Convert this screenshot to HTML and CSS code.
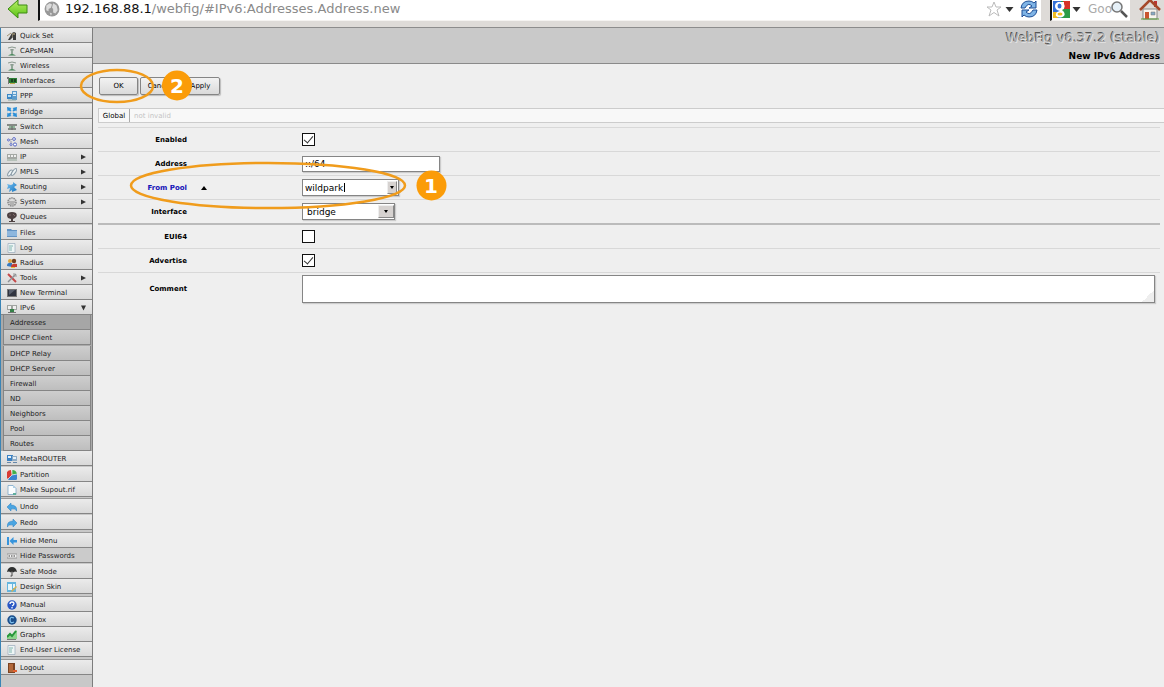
FILE: index.html
```
<!DOCTYPE html>
<html lang="en">
<head>
<meta charset="utf-8">
<title>New IPv6 Address - WebFig</title>
<link rel="stylesheet" href="styles.css">
</head>
<body>
<svg class="sprite" aria-hidden="true">
  <linearGradient id="gg" x1="0" y1="0" x2="0" y2="1"><stop offset="0" stop-color="#b9ee68"/><stop offset="1" stop-color="#58c312"/></linearGradient>
  <linearGradient id="bl" x1="0" y1="0" x2="1" y2="1"><stop offset="0" stop-color="#7cc4f2"/><stop offset="1" stop-color="#1674c0"/></linearGradient>
  <symbol id="i-quick" viewBox="0 0 10 10"><path d="M1 9L5 2l2-1 2 1v7H6V6L3 9z" fill="#3b3b3b"/><path d="M0 5l4-3" stroke="#a09070"/><path d="M5 3h3M5 5h1" stroke="#c9b98d"/></symbol>
  <symbol id="i-ant" viewBox="0 0 10 10"><path d="M5 3v5" stroke="#5c7f66" stroke-width="1.200"/><path d="M1 2q4-2 8 0M3 4q2-1 4 0" stroke="#8c9a90" fill="none"/><path d="M1 9.500q4-3 8 0z" fill="#3c8050"/></symbol>
  <symbol id="i-if" viewBox="0 0 10 10"><path d="M0 1h2v7H1V3H0z" fill="#777"/><path d="M2 2h8v5H2z" fill="#2c7d35"/><path d="M4 3h2v3H4zM7 3h2v3H7z" fill="#1d4021"/><path d="M3 7h5v1H3z" fill="#bba74a"/></symbol>
  <symbol id="i-ppp" viewBox="0 0 10 10"><path d="M0 3h5v5H0z" fill="#3c86c4"/><path d="M1 4h3v2H1z" fill="#b4dcf5"/><path d="M5 0h5v9H5z" fill="#5b9acb"/><path d="M6 1h3v2H6zM6 4h3v1H6z" fill="#d4e8f6"/><path d="M1 9h8" stroke="#8aa"/></symbol>
  <symbol id="i-bridge" viewBox="0 0 10 10"><path d="M0 0l4.500 1-1 1 1 2-1 .5-2-1-1 1zM10 0L5.500 1l1 1-1 2 1 .5 2-1 1 1zM0 10l4.500-1-1-1 1-2-1-.5-2 1-1-1zM10 10L5.500 9l1-1-1-2 1-.5 2 1 1-1z" fill="#2b8fd8"/></symbol>
  <symbol id="i-switch" viewBox="0 0 10 10"><path d="M0 2h10v2H0zM1 6h8v2H1z" fill="#858a85"/><path d="M2 5h6" stroke="#3c8a50"/><path d="M5 4v4" stroke="#666"/></symbol>
  <symbol id="i-mesh" viewBox="0 0 10 10"><g fill="#fff" stroke="#5666c4"><circle cx="1.500" cy="3" r="1"/><circle cx="7" cy="2" r="1.400"/><circle cx="8" cy="7.500" r="1.600"/><circle cx="4" cy="7.500" r="1"/></g><path d="M3 3l3-1M4 6V4" stroke="#99a"/></symbol>
  <symbol id="i-ip" viewBox="0 0 10 10"><path d="M0 2h10v5H0z" fill="#a4a8a4"/><path d="M1 3h2v2H1zM4 3h2v2H4zM7 3h2v2H7z" fill="#eee"/><path d="M1 7v2M3 7v2M5 7v2M7 7v2M9 7v2" stroke="#5c8065" stroke-width=".6"/></symbol>
  <symbol id="i-mpls" viewBox="0 0 10 10"><g fill="#edf3f5" stroke="#8c9ca8"><ellipse cx="3" cy="6" rx="1.500" ry="3.500" transform="rotate(35 3 6)"/><ellipse cx="7" cy="5" rx="1.500" ry="4" transform="rotate(35 7 5)"/></g></symbol>
  <symbol id="i-route" viewBox="0 0 10 10"><path d="M0 2l4 1 2-1V0l4 3-3 2 3 3-5 2V8L2 10l1-4-3 1 1-3z" fill="url(#bl)"/></symbol>
  <symbol id="i-sys" viewBox="0 0 10 10"><circle cx="5" cy="5" r="4" fill="#ddd" stroke="#888" stroke-dasharray="1.500 .7" stroke-width="1.600"/><path d="M2 5h6M3 7h4" stroke="#888"/></symbol>
  <symbol id="i-queue" viewBox="0 0 10 10"><path d="M1 1q4-2 8 0 2 3-1 5l-2 1v2h2v1H2V9h2V7L1 6Q-1 3 1 1" fill="#4d4142"/><path d="M2 3h2M6 2l2 2" stroke="#806c6c"/></symbol>
  <symbol id="i-files" viewBox="0 0 10 10"><path d="M0 1h4l1 1h5v7H0z" fill="#6393c3"/><path d="M0 3h10v5H0z" fill="#8db6dd"/></symbol>
  <symbol id="i-log" viewBox="0 0 10 10"><path d="M1 .5h7v9H1z" fill="#eef5f5" stroke="#9ab" stroke-width=".7"/><path d="M2 3h4M2 5h3M2 7h3" stroke="#64a5a0" stroke-width=".8"/></symbol>
  <symbol id="i-radius" viewBox="0 0 10 10"><circle cx="3" cy="3" r="2" fill="#e0a63d"/><path d="M0 8q0-4 5-3v4z" fill="#367ac1"/><circle cx="7" cy="3" r="2.200" fill="#704020"/><path d="M4 9q0-4 6-3v3z" fill="#c73c31"/><path d="M4 9h4v1H4z" fill="#e8bf3c"/></symbol>
  <symbol id="i-tools" viewBox="0 0 10 10"><path d="M1 1l8 8" stroke="#c44848" stroke-width="2"/><path d="M9 1L1 9" stroke="#8c9095" stroke-width="1.500"/><path d="M7 0v3h3" stroke="#999" fill="none"/></symbol>
  <symbol id="i-term" viewBox="0 0 10 10"><path d="M0 1h10v8H0z" fill="#777"/><path d="M1 2h8v6H1z" fill="#303440"/><path d="M2 2h6L2 7z" fill="#59606e"/></symbol>
  <symbol id="i-ipv6" viewBox="0 0 10 10"><path d="M0 2h10v5H0z" fill="#a0a4a0"/><path d="M1 3h3v3H1zM6 3h3v3H6z" fill="#f0f0f0"/><path d="M3 6h4v3H3z" fill="#368148"/><path d="M1 9.500h8" stroke="#777"/></symbol>
  <symbol id="i-meta" viewBox="0 0 10 10"><path d="M0 1h6v6H0z" fill="#3c82c4"/><path d="M5 2h5v5H5z" fill="#8fabc4"/><path d="M1 2h3v2H1zM6 3h3v2H6z" fill="#e4f0fa"/><path d="M0 8.500h4M6 8.500h4" stroke="#68a"/></symbol>
  <symbol id="i-part" viewBox="0 0 10 10"><path d="M5 5L1 9A5 5 0 0 1 4 0z" fill="#d93c35"/><path d="M5 5V0a5 5 0 0 1 5 4z" fill="#3fae49"/><path d="M5 5l5-1a5 5 0 0 1-9 5z" fill="#3a83cf"/><path d="M5 5V0M5 5l5-1M5 5L1 9" stroke="#fff" stroke-width=".6"/></symbol>
  <symbol id="i-file" viewBox="0 0 10 10"><path d="M1 .5h5l3 3v6H1z" fill="#fafdff" stroke="#7ba6c6" stroke-width=".8"/><path d="M6 0v3h3z" fill="#afd0e6"/><path d="M6 8h3v2H6z" fill="#5eae9c"/></symbol>
  <symbol id="i-undo" viewBox="0 0 10 10"><path d="M0 5l4-4v2q6 0 6 6Q8 6 4 7v2z" fill="#4aa5e2" stroke="#2b7fc0" stroke-width=".5"/></symbol>
  <symbol id="i-redo" viewBox="0 0 10 10"><path d="M10 5L6 1v2Q0 3 0 9q2-3 6-2v2z" fill="#4aa5e2" stroke="#2b7fc0" stroke-width=".5"/></symbol>
  <symbol id="i-hide" viewBox="0 0 10 10"><path d="M0 1h2v8H0zM2.500 5l4-4v3H10v2.500H6.500V9z" fill="#3694dc"/></symbol>
  <symbol id="i-pass" viewBox="0 0 10 10"><path d="M0 3h10v4H0z" fill="#f4f4f4" stroke="#888" stroke-width=".8"/><path d="M1.500 5h7" stroke="#333" stroke-width="1.200" stroke-dasharray="1.500 1"/></symbol>
  <symbol id="i-safe" viewBox="0 0 10 10"><path d="M0 5q1-5 5-5t5 5L8 4.500 6 5.500 5 4.500 4 5.500 2 4.500z" fill="#2e3030"/><path d="M5 4v5H3.500" fill="none" stroke="#444"/></symbol>
  <symbol id="i-skin" viewBox="0 0 10 10"><path d="M0 0h9v10H0z" fill="#65b5df"/><path d="M1 2h4v6H1zM6 2h2v4H6z" fill="#e6f5fb"/><path d="M4 9l5-5 1 1-5 5z" fill="#d9b04b"/></symbol>
  <symbol id="i-man" viewBox="0 0 10 10"><circle cx="5" cy="5" r="4.700" fill="#2a57c4"/><path d="M3 4q0-2 2-2t2 1.500T5 6M5 7v1.500" fill="none" stroke="#fff" stroke-width="1.300"/></symbol>
  <symbol id="i-win" viewBox="0 0 10 10"><circle cx="5" cy="5" r="4.700" fill="#1c4f8c"/><path d="M7 3Q3 1 3 5t4 2" fill="none" stroke="#7fc0ee" stroke-width="1.300"/></symbol>
  <symbol id="i-graph" viewBox="0 0 10 10"><path d="M0 9V6l3-3 2 2 4-5 1 1v8z" fill="#8dd58d"/><path d="M0 7l3-3 2 2 4-5" fill="none" stroke="#27963a" stroke-width="2"/><path d="M0 9.500h9" stroke="#777"/></symbol>
  <symbol id="i-out" viewBox="0 0 10 10"><path d="M1 0h7v10H1z" fill="#7b4322"/><path d="M2 1h4v8H2z" fill="#b2683a"/><path d="M6 7h4v2H6z" fill="#e06030"/></symbol>
  <symbol id="i-right" viewBox="0 0 6 6"><path d="M0 0l6 3-6 3z" fill="#333"/></symbol>
  <symbol id="i-down" viewBox="0 0 6 6"><path d="M0 0h6L3 6z" fill="#333"/></symbol>
</svg>

<div class="page">
  <header class="browser">
    <button class="back" aria-label="Back"><svg viewBox="0 0 22 20"><path d="M1 9L11 0v5h9v8h-9v5z" fill="url(#gg)" stroke="#3c8a12"/></svg></button>
    <div class="urlbar">
      <svg class="globe" viewBox="0 0 14 14" aria-hidden="true"><circle cx="7" cy="7" r="6.500" fill="#989898"/><path d="M2 4l3-2 2 1-1 3-2 1v2L2 8zM8 2l3 2 1 4-2 3-2-1V7l-1-1zM5 10l2 1-1 2z" fill="#dcdcdc"/></svg>
      <div class="url" role="textbox" aria-label="Location"><b>192.168.88.1</b>/webfig/#IPv6:Addresses.Address.new</div>
      <svg class="star" viewBox="0 0 16 16" aria-hidden="true"><path d="M8 1l2 5h5l-4 3 2 6-5-3.500L3 15l2-6-4-3h5z" fill="#fff" stroke="#bbb"/></svg>
      <svg class="tri" viewBox="0 0 8 5" aria-hidden="true"><path d="M0 0h8L4 5z" fill="#333"/></svg>
      <button class="reload" aria-label="Reload"><svg viewBox="0 0 18 18"><path d="M1 8Q2 1 9 1q3 0 5 2l2-2v7H9l3-2Q8 2 5 8z" fill="#7fb4e6" stroke="#1f4f96"/><path d="M17 10q-1 7-8 7-3 0-5-2l-2 2v-7h7l-3 2q4 4 7-2z" fill="#7fb4e6" stroke="#1f4f96"/></svg></button>
    </div>
    <div class="search">
      <svg class="goog" viewBox="0 0 17 17" aria-hidden="true"><path d="M0 0h17v17H0z" fill="#2b9b46"/><path d="M0 0h8v17H0z" fill="#3370d8"/><path d="M10 0h7v8h-7z" fill="#d63228"/><path d="M0 11h8l-3 6H0z" fill="#f0bb22"/><path d="M5 1h6v2q2 4-2 6 4 3 2 6-4 3-8 0-1-4 4-5Q2 9 2 5q0-3 3-4z" fill="#fff"/><ellipse cx="6.500" cy="5" rx="2" ry="2.500" fill="#3370d8"/><ellipse cx="7" cy="13" rx="2.500" ry="1.500" fill="#f0bb22"/></svg>
      <svg class="tri" viewBox="0 0 8 5" aria-hidden="true"><path d="M0 0h8L4 5z" fill="#333"/></svg>
      <input class="q" type="text" placeholder="Goo" aria-label="Search">
      <svg class="lens" viewBox="0 0 17 17" aria-hidden="true"><circle cx="6" cy="6" r="5" fill="#e6f0f8" stroke="#777" stroke-width="1.500"/><path d="M10 10l6 6" stroke="#555" stroke-width="2.500"/></svg>
    </div>
    <button class="home" aria-label="Home"><svg viewBox="0 0 22 20"><path d="M4 9h14v10H4z" fill="#f7f4ee" stroke="#888"/><path d="M15 1h3v6h-3z" fill="#b33"/><path d="M1 10L11 0l10 10" fill="none" stroke="#a5482a" stroke-width="2.500"/><path d="M6 12h4v7H6z" fill="#c9552f"/><path d="M12 12h4v3h-4z" fill="#86a9c4" stroke="#777" stroke-width=".5"/><path d="M2 19h18" stroke="#5da13a"/></svg></button>
  </header>

  <div class="app">
    <nav class="menu">
      <ul>
        <li><a href="#"><svg><use href="#i-quick"/></svg>Quick Set</a></li>
        <li><a href="#"><svg><use href="#i-ant"/></svg>CAPsMAN</a></li>
        <li><a href="#"><svg><use href="#i-ant"/></svg>Wireless</a></li>
        <li><a href="#"><svg><use href="#i-if"/></svg>Interfaces</a></li>
        <li class="spaced"><a href="#"><svg><use href="#i-ppp"/></svg>PPP</a></li>
        <li><a href="#"><svg><use href="#i-bridge"/></svg>Bridge</a></li>
        <li><a href="#"><svg><use href="#i-switch"/></svg>Switch</a></li>
        <li><a href="#"><svg><use href="#i-mesh"/></svg>Mesh</a></li>
        <li><a href="#"><svg><use href="#i-ip"/></svg>IP<svg class="arrow"><use href="#i-right"/></svg></a></li>
        <li><a href="#"><svg><use href="#i-mpls"/></svg>MPLS<svg class="arrow"><use href="#i-right"/></svg></a></li>
        <li><a href="#"><svg><use href="#i-route"/></svg>Routing<svg class="arrow"><use href="#i-right"/></svg></a></li>
        <li><a href="#"><svg><use href="#i-sys"/></svg>System<svg class="arrow"><use href="#i-right"/></svg></a></li>
        <li class="spaced"><a href="#"><svg><use href="#i-queue"/></svg>Queues</a></li>
        <li><a href="#"><svg><use href="#i-files"/></svg>Files</a></li>
        <li><a href="#"><svg><use href="#i-log"/></svg>Log</a></li>
        <li><a href="#"><svg><use href="#i-radius"/></svg>Radius</a></li>
        <li><a href="#"><svg><use href="#i-tools"/></svg>Tools<svg class="arrow"><use href="#i-right"/></svg></a></li>
        <li><a href="#"><svg><use href="#i-term"/></svg>New Terminal</a></li>
        <li><a href="#"><svg><use href="#i-ipv6"/></svg>IPv6<svg class="arrow"><use href="#i-down"/></svg></a>
          <ul class="sub">
            <li><a class="current" href="#">Addresses</a></li>
            <li class="spaced"><a href="#">DHCP Client</a></li>
            <li><a href="#">DHCP Relay</a></li>
            <li><a href="#">DHCP Server</a></li>
            <li><a href="#">Firewall</a></li>
            <li><a href="#">ND</a></li>
            <li><a href="#">Neighbors</a></li>
            <li><a href="#">Pool</a></li>
            <li><a href="#">Routes</a></li>
          </ul>
        </li>
        <li class="spaced"><a href="#"><svg><use href="#i-meta"/></svg>MetaROUTER</a></li>
        <li><a href="#"><svg><use href="#i-part"/></svg>Partition</a></li>
        <li><a href="#"><svg><use href="#i-file"/></svg>Make Supout.rif</a></li>
      </ul>
      <ul>
        <li class="spaced"><a href="#"><svg><use href="#i-undo"/></svg>Undo</a></li>
        <li><a href="#"><svg><use href="#i-redo"/></svg>Redo</a></li>
      </ul>
      <ul>
        <li><a href="#"><svg><use href="#i-hide"/></svg>Hide Menu</a></li>
        <li class="spaced"><a class="on" href="#"><svg><use href="#i-pass"/></svg>Hide Passwords</a></li>
        <li><a href="#"><svg><use href="#i-safe"/></svg>Safe Mode</a></li>
        <li><a href="#"><svg><use href="#i-skin"/></svg>Design Skin</a></li>
      </ul>
      <ul>
        <li><a href="#"><svg><use href="#i-man"/></svg>Manual</a></li>
        <li><a href="#"><svg><use href="#i-win"/></svg>WinBox</a></li>
        <li><a href="#"><svg><use href="#i-graph"/></svg>Graphs</a></li>
        <li><a href="#"><svg><use href="#i-log"/></svg>End-User License</a></li>
      </ul>
      <ul>
        <li><a href="#"><svg><use href="#i-out"/></svg>Logout</a></li>
      </ul>
    </nav>

    <main class="main">
      <div class="banner">
        <div class="product">WebFig v6.37.2 (stable)</div>
        <h1>New IPv6 Address</h1>
      </div>
      <form class="editor">
        <div class="actions">
          <button type="button">OK</button>
          <button type="button">Cancel</button>
          <button type="button">Apply</button>
        </div>
        <div class="tabs"><a href="#">Global</a><span>not invalid</span></div>
        <div class="rows">
          <div class="row"><label for="enabled">Enabled</label><input id="enabled" type="checkbox" checked></div>
          <div class="row"><label for="address">Address</label><input class="text" id="address" type="text" value="::/64"></div>
          <div class="row changed"><label for="pool">From Pool</label>
            <svg class="up" viewBox="0 0 6 4" aria-hidden="true"><path d="M3 0l3 4H0z"/></svg>
            <span class="combo pool"><input id="pool" type="text" value="wildpark"><i class="caret"></i><button type="button" aria-label="Choose pool"><svg viewBox="0 0 4 3"><path d="M0 0h4L2 3z"/></svg></button></span></div>
          <div class="row last"><label for="iface">Interface</label>
            <span class="combo iface"><select id="iface"><option>bridge</option></select><span class="drop"><svg viewBox="0 0 4 3"><path d="M0 0h4L2 3z"/></svg></span></span></div>
          <div class="row"><label for="eui">EUI64</label><input id="eui" type="checkbox"></div>
          <div class="row"><label for="adv">Advertise</label><input id="adv" type="checkbox" checked></div>
          <div class="row note"><label for="comment">Comment</label><textarea id="comment"></textarea></div>
        </div>
      </form>
    </main>
  </div>

  <svg class="marks" width="460" height="220" aria-hidden="true">
    <g fill="none" stroke="#f09c1c" stroke-width="2.500"><ellipse cx="117" cy="86" rx="36" ry="16"/><ellipse cx="268" cy="185.500" rx="137" ry="22.500"/></g>
    <circle cx="177" cy="85.500" r="15"/><circle cx="431.500" cy="185.500" r="15"/>
    <text x="177" y="93">2</text><text x="431" y="193">1</text>
  </svg>
</div>
</body>
</html>
```
FILE: styles.css
```
* { box-sizing: border-box; }
body {
  margin: 0;
  background: #efefef;
  color: #222;
  font: 7px/14px "DejaVu Sans", sans-serif;
}
button, input, select, textarea { font: inherit; color: inherit; margin: 0; padding: 0; border: 0; border-radius: 0; }
a { color: inherit; text-decoration: none; }
ul { list-style: none; margin: 0; padding: 0; }
.sprite { position: absolute; width: 0; height: 0; }
.page { position: relative; display: flex; flex-direction: column; min-height: 100vh; }

/* browser toolbar */
.browser {
  display: flex;
  align-items: flex-start;
  height: 28px;
  padding: 0 3px 0 7px;
  background: #dedbd8;
  border-bottom: 1px solid #8c8c8c;
}
.browser button { background: none; }
.back { width: 22px; height: 20px; margin-right: 9px; }
.back svg, .home svg, .reload svg { display: block; width: 100%; height: 100%; }
.urlbar, .search {
  display: flex;
  align-items: center;
  height: 21px;
  background: #fff;
  border-left: 2px solid #111;
  border-bottom: 1px solid #f5f3f1;
}
.urlbar { flex: 1; padding: 0 3px 2px 4px; }
.globe { width: 16px; height: 16px; margin-right: 5px; }
.url { flex: 1; font-size: 13px; line-height: 18px; color: #8a8a8a; }
.url b { font-weight: 400; color: #111; }
.star { width: 16px; height: 16px; margin-right: 3px; }
.tri { width: 9px; height: 5px; }
.reload { width: 18px; height: 18px; margin-left: 6px; }
.search { width: 80px; margin-left: 9px; padding: 0 2px 2px 1px; }
.goog { width: 17px; height: 17px; margin-right: 2px; }
.q { flex: 1; min-width: 0; margin-left: 7px; font-size: 12px; background: none; }
.q::placeholder { color: #aaa; opacity: 1; }
.lens { width: 17px; height: 17px; margin-left: -4px; }
.home { width: 22px; height: 20px; margin-left: 9px; }

/* side menu */
.app { display: flex; flex: 1; }
.menu {
  flex: none;
  width: 93px;
  background: #c8c8c8;
  border-left: 1px solid #3b84b5;
  border-right: 1px solid #7d7d7d;
}
.menu > ul + ul { margin-top: 2px; border-top: 1px solid #999; }
.menu > ul:nth-child(2) { margin-top: 1px; }
.menu .spaced { margin-bottom: 1px; }
.menu a {
  display: flex;
  align-items: center;
  height: 15px;
  padding: 1px 6px 0;
  background: linear-gradient(#ebebeb, #d9d9d9);
  border-bottom: 1px solid #858585;
}
.menu a svg { width: 10px; height: 10px; margin-right: 3px; }
.menu a svg.arrow { width: 5px; height: 6px; margin: 0 0 0 auto; }
.menu a.on { background: #cbcbcb; }
.menu .sub { padding: 0 1px 0 2px; background: #aaa; }
.menu .sub a { background: linear-gradient(#cecece, #bebebe); border-left: 1px solid #858585; border-right: 1px solid #858585; }
.menu .sub a.current { background: #a6a6a6; }

/* content */
.main { flex: 1; min-width: 0; }
.banner {
  height: 36px;
  padding: 0 4px;
  background: #c9c9c9;
  border-bottom: 1px solid #8a8a8a;
  text-align: right;
}
.product { font-size: 13px; line-height: 20px; color: #aaa; text-shadow: 1px 1px 0 #e0e0e0, -1px -1px 0 #555; }
.banner h1 { margin: 0; font-size: 9px; line-height: 16px; color: #000; }
.editor { padding: 13px 0 0 5px; color: #000; }
.actions { display: flex; gap: 2px; padding-left: 1px; margin-bottom: 13px; }
.actions button {
  width: 39px;
  height: 18px;
  background: linear-gradient(#f2f2f2, #dadada);
  border: 1px solid #858585;
  border-radius: 2px;
  box-shadow: 1px 1px 1px #bbb;
}
.tabs { display: flex; height: 15px; background: #f8f8f8; border: 1px solid #ccc; border-right: 0; }
.tabs a { width: 31px; border-right: 1px solid #aaa; text-align: center; }
.tabs span { padding-left: 4px; color: #c4c4c4; }

.rows { margin: 4px 4px 0 0; border-top: 1px solid #d8d8d8; }
.row {
  display: grid;
  grid-template-columns: 89px 115px 1fr;
  align-items: center;
  min-height: 24px;
  border-bottom: 1px solid #d8d8d8;
}
.row label { font-weight: 700; text-align: right; }
.row > :last-child { grid-column: 3; }
.row.last { min-height: 25px; border-bottom: 2px solid #bbb; }
.row.note { min-height: 32px; border-bottom: 0; padding-right: 5px; }
.changed label { color: #1512b8; }
.up { width: 6px; height: 4px; margin-left: 14px; }
.text, .combo, textarea { background: #fff; border: 1px solid #858585; box-shadow: 1px 1px 1px #ccc; }
.text { width: 138px; height: 16px; padding: 0 2px; font-size: 9px; }
.combo { display: flex; align-items: center; height: 17px; font-size: 9px; }
.combo input, .combo select { flex: 1; min-width: 0; width: 100%; height: 14px; background: none; outline: 0; appearance: none; }
.combo button, .drop { display: flex; align-items: center; justify-content: center; height: 13px; background: #d6d2d0; border: 1px solid #aaa; border-color: #eee #888 #888 #eee; }
.combo button svg, .drop svg { width: 4px; height: 3px; }
.pool { position: relative; width: 97px; padding: 0 1px 0 2px; }
.pool button { width: 10px; }
.caret { position: absolute; left: 41px; top: 3px; width: 1px; height: 9px; background: #000; }
.iface { position: relative; width: 93px; padding-left: 4px; }
.drop { position: absolute; right: 0; top: 1px; width: 16px; pointer-events: none; }
input[type="checkbox"] {
  appearance: none;
  width: 13px;
  height: 13px;
  background: #fff;
  border: 1px solid #111;
  display: grid;
  place-items: center;
}
input[type="checkbox"]:checked::before {
  content: "";
  width: 4px;
  height: 8px;
  margin-bottom: 2px;
  border: solid #333;
  border-width: 0 1px 1px 0;
  transform: rotate(40deg);
}
textarea { display: block; width: 100%; height: 28px; resize: vertical; }
textarea::-webkit-resizer { background: linear-gradient(135deg, #fff 60%, #eee 60%); }

/* numbered annotations drawn above the form */
.marks { position: absolute; left: 0; top: 0; pointer-events: none; }
.marks circle { fill: #fb9c08; }
.marks text { fill: #fff; font-size: 20px; font-weight: 700; text-anchor: middle; }
```
